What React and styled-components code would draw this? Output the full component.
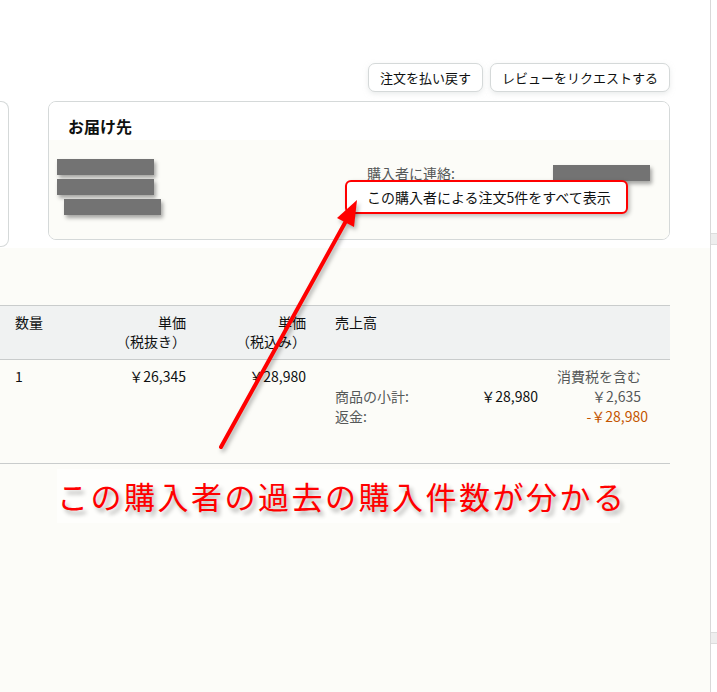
import React from "react";
import styled, { createGlobalStyle } from "styled-components";

const Global = createGlobalStyle`
  html, body { margin: 0; padding: 0; }
  body {
    font-family: "Noto Sans CJK JP", "Noto Sans", sans-serif;
    color: #0f1111;
    font-size: 14px;
    background: #ffffff;
  }
  * { box-sizing: border-box; }
`;

const Page = styled.div`
  position: relative;
  display: flex;
  width: 717px;
  height: 692px;
  overflow: hidden;
`;

const Main = styled.div`
  width: 710px;
  display: flex;
  flex-direction: column;
  background: #fcfcf8;
`;

const Scrollbar = styled.div`
  width: 7px;
  border-left: 1px solid #d9d9d9;
  background: #ffffff;
  display: flex;
  flex-direction: column;
`;

const Thumb = styled.div`
  height: 12px;
  margin-top: ${(p) => p.$top}px;
  background: #eeeeee;
  border-top: 1px solid #dddddd;
  border-bottom: 1px solid #dddddd;
`;

const TopSection = styled.div`
  height: 248px;
  background: #ffffff;
  padding-top: 63px;
  display: flex;
  flex-direction: column;
`;

const Actions = styled.div`
  display: flex;
  justify-content: flex-end;
  gap: 7px;
  padding-right: 40px;
`;

const Button = styled.button`
  height: 29px;
  padding: 0 11px;
  font-family: inherit;
  font-size: 13px;
  color: #0f1111;
  background: #ffffff;
  border: 1px solid #d5d9d9;
  border-radius: 7px;
  box-shadow: 0 2px 5px rgba(213, 217, 217, 0.5);
`;

const CardsRow = styled.div`
  margin-top: 9px;
  display: flex;
  align-items: flex-start;
  gap: 39px;
`;

const CardStub = styled.div`
  width: 9px;
  height: 146px;
  border: 1px solid #d5d9d9;
  border-left: none;
  border-radius: 0 8px 8px 0;
  background: #ffffff;
`;

const Card = styled.div`
  width: 622px;
  height: 139px;
  border: 1px solid #d5d9d9;
  border-radius: 8px;
  overflow: hidden;
  display: flex;
  flex-direction: column;
`;

const CardHeader = styled.div`
  height: 38px;
  padding: 12px 0 0 19px;
  background: #ffffff;
`;

const CardTitle = styled.h3`
  margin: 0;
  font-size: 16px;
  line-height: 24px;
  font-weight: 700;
`;

const CardBody = styled.div`
  flex: 1;
  background: #fcfcf8;
  display: grid;
  grid-template-columns: 310px 1fr;
  padding-left: 8px;
`;

const BarStack = styled.div`
  padding-top: 19px;
  display: flex;
  flex-direction: column;
  gap: 4px;
`;

const Redact = styled.div`
  width: 97px;
  height: 16px;
  margin-left: ${(p) => p.$offset || 0}px;
  background: #737373;
  box-shadow: 2px 3px 4px rgba(0, 0, 0, 0.35);
`;

const Contact = styled.div`
  padding-top: 23px;
  display: flex;
  flex-direction: column;
`;

const ContactRow = styled.div`
  display: flex;
  align-items: center;
  height: 20px;
  line-height: 20px;
`;

const Label = styled.span`
  color: #565959;
  width: ${(p) => (p.$w ? `${p.$w}px` : "auto")};
`;

const Highlight = styled.div`
  margin-top: -3px;
  margin-left: -22px;
  width: 283px;
  height: 34px;
  padding: 5px 0 5px 20px;
  line-height: 20px;
  border: 2px solid #ff0000;
  border-radius: 6px;
  box-shadow: 2px 2px 4px rgba(0, 0, 0, 0.25);
  color: #0f1111;
  background: #ffffff;
`;

const Table = styled.div`
  margin-top: 57px;
  width: 670px;
`;

const HeaderRow = styled.div`
  display: grid;
  grid-template-columns: 85px 86px 120px 1fr;
  padding: 7px 0 0 15px;
  height: 55px;
  background: #f0f2f2;
  border-top: 1px solid #c9cccc;
  border-bottom: 1px solid #c9cccc;
  line-height: 19px;
`;

const BodyRow = styled.div`
  display: grid;
  grid-template-columns: 85px 86px 120px 1fr;
  align-items: start;
  padding: 6px 0 0 15px;
  height: 104px;
  border-bottom: 1px solid #c9cccc;
  line-height: 20px;
`;

const Cell = styled.div`
  text-align: ${(p) => (p.$right ? "right" : "left")};
  padding-left: ${(p) => (p.$pad ? "29px" : "0")};
`;

const Totals = styled.div`
  display: grid;
  grid-template-columns: 105px 98px 103px;
  grid-auto-rows: 20px;
  align-content: start;
  padding-left: 29px;
  line-height: 20px;
`;

const Amount = styled.div`
  text-align: right;
  color: ${(p) => p.$color || "#0f1111"};
  margin-right: ${(p) => p.$shift || 0}px;
`;

const Note = styled.div`
  margin: 5px 0 0 57px;
  width: 563px;
  height: 54px;
  background: rgba(255, 255, 255, 0.6);
  font-size: 31px;
  line-height: 54px;
  letter-spacing: 2.5px;
  color: #ff0000;
  white-space: nowrap;
  text-shadow: 3px 4px 4px rgba(0, 0, 0, 0.3);
`;

const Overlay = styled.svg`
  position: absolute;
  left: 0;
  top: 0;
  pointer-events: none;
  filter: drop-shadow(2px 3px 2px rgba(0, 0, 0, 0.3));
`;

export default function App() {
  return (
    <>
      <Global />
      <Page>
        <Main>
          <TopSection>
            <Actions>
              <Button>注文を払い戻す</Button>
              <Button>レビューをリクエストする</Button>
            </Actions>
            <CardsRow>
              <CardStub />
              <Card>
                <CardHeader>
                  <CardTitle>お届け先</CardTitle>
                </CardHeader>
                <CardBody>
                  <BarStack>
                    <Redact />
                    <Redact />
                    <Redact $offset={7} />
                  </BarStack>
                  <Contact>
                    <ContactRow>
                      <Label $w={186}>購入者に連絡:</Label>
                      <Redact />
                    </ContactRow>
                    <Highlight>この購入者による注文5件をすべて表示</Highlight>
                  </Contact>
                </CardBody>
              </Card>
            </CardsRow>
          </TopSection>

          <Table>
            <HeaderRow>
              <Cell>数量</Cell>
              <Cell $right>
                単価
                <br />
                （税抜き）
              </Cell>
              <Cell $right>
                単価
                <br />
                （税込み）
              </Cell>
              <Cell $pad>売上高</Cell>
            </HeaderRow>
            <BodyRow>
              <Cell>1</Cell>
              <Cell $right>￥26,345</Cell>
              <Cell $right>￥28,980</Cell>
              <Totals>
                <div />
                <div />
                <Amount $color="#565959">消費税を含む</Amount>
                <Label>商品の小計:</Label>
                <Amount>￥28,980</Amount>
                <Amount $color="#565959">￥2,635</Amount>
                <Label>返金:</Label>
                <div />
                <Amount $color="#c45500" $shift={-7}>
                  -￥28,980
                </Amount>
              </Totals>
            </BodyRow>
          </Table>

          <Note>この購入者の過去の購入件数が分かる</Note>
        </Main>
        <Scrollbar>
          <Thumb $top={233} />
          <Thumb $top={387} />
        </Scrollbar>

        <Overlay width="717" height="692" viewBox="0 0 717 692">
          <line
            x1="221"
            y1="447"
            x2="346"
            y2="221"
            stroke="#ff0000"
            strokeWidth="4"
            strokeLinecap="round"
          />
          <polygon points="357,200 354,227 337,218" fill="#ff0000" />
        </Overlay>
      </Page>
    </>
  );
}
